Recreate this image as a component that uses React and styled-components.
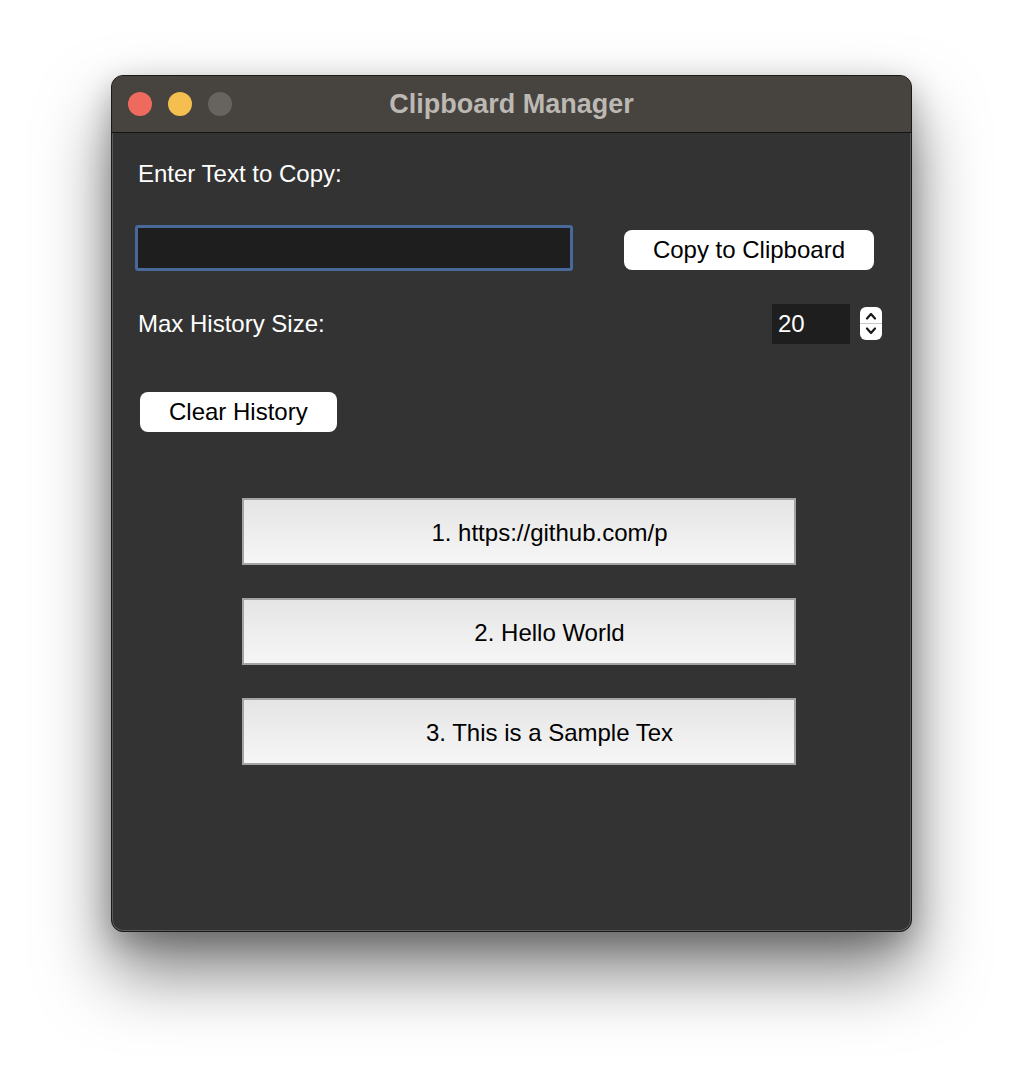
import styled, { createGlobalStyle } from "styled-components"

const Global = createGlobalStyle`
  html, body { margin: 0; padding: 0; background: #ffffff; }
  body { font-family: "Liberation Sans", Arial, sans-serif; }
`

const Page = styled.div`
  padding: 75px 0 0 111px;
  height: 1005px;
`

const Window = styled.div`
  width: 801px;
  height: 857px;
  box-sizing: border-box;
  border: 1px solid #1a1a1a;
  border-radius: 12px;
  overflow: hidden;
  background: #333333;
  box-shadow: 0 0 0 1px #5a5a5a inset, 0 40px 70px rgba(0,0,0,.5), 0 10px 30px rgba(0,0,0,.25);
  display: flex;
  flex-direction: column;
`

const TitleBar = styled.div`
  height: 56px;
  flex-shrink: 0;
  background: #47433f;
  border-bottom: 1px solid #141414;
  display: flex;
  align-items: center;
  position: relative;
  padding-left: 16px;
  gap: 16px;
`

const Light = styled.span`
  width: 24px;
  height: 24px;
  border-radius: 50%;
  background: ${p => p.$color};
`

const Title = styled.div`
  position: absolute;
  left: 0;
  right: 0;
  text-align: center;
  font-weight: bold;
  font-size: 27px;
  color: #bcb8b3;
  pointer-events: none;
`

const Body = styled.div`
  flex: 1;
  padding: 27px 29px 0 23px;
  display: flex;
  flex-direction: column;
`

const Label = styled.div`
  color: #ffffff;
  font-size: 24px;
  line-height: 28px;
  margin-left: 3px;
`

const Row = styled.div`
  display: flex;
  align-items: ${p => p.$align || "center"};
  justify-content: space-between;
  margin-top: ${p => p.$top || 0}px;
`

const TextInput = styled.div`
  width: 432px;
  height: 40px;
  border: 3px solid #49699a;
  border-radius: 3px;
  background: #1e1e1e;
`

const PillButton = styled.button`
  height: 40px;
  padding: 0 ${p => p.$pad || 29}px;
  border: none;
  border-radius: 8px;
  background: #ffffff;
  color: #000000;
  font-family: "Liberation Sans", Arial, sans-serif;
  font-size: 24px;
  margin: ${p => p.$margin || "0"};
`

const Spin = styled.div`
  display: flex;
  align-items: center;
  gap: 10px;
`

const SpinBox = styled.div`
  width: 78px;
  height: 40px;
  background: #1e1e1e;
  color: #ffffff;
  font-size: 24px;
  box-sizing: border-box;
  padding-left: 6px;
  display: flex;
  align-items: center;
`

const Stepper = styled.div`
  width: 22px;
  height: 33px;
  border-radius: 6px;
  background: #ffffff;
  display: flex;
  flex-direction: column;
  align-items: center;
  justify-content: center;
  margin-top: -2px;
`

const StepDivider = styled.div`
  width: 100%;
  height: 1px;
  background: #c8c8c8;
  margin: 3px 0;
`

const List = styled.div`
  display: flex;
  flex-direction: column;
  align-items: center;
  gap: 33px;
  margin-top: 66px;
  padding-left: 20px;
`

const Item = styled.div`
  width: 554px;
  height: 67px;
  box-sizing: border-box;
  border: 2px solid #a4a4a4;
  background: linear-gradient(#e5e5e5, #f6f6f6);
  display: flex;
  align-items: center;
  justify-content: center;
  padding: 3px 0 0 62px;
  font-size: 24px;
  color: #000000;
`

const Chevron = ({ up }) => (
  <svg width="12" height="8" viewBox="0 0 12 8" fill="none" stroke="#1a1a1a" strokeWidth="2.2" strokeLinecap="round" strokeLinejoin="round">
    <path d={up ? "M2 6.5 L6 2 L10 6.5" : "M2 1.5 L6 6 L10 1.5"} />
  </svg>
)

const history = ["1. https://github.com/p", "2. Hello World", "3. This is a Sample Tex"]

export default function App() {
  return (
    <>
      <Global />
      <Page>
        <Window>
          <TitleBar>
            <Light $color="#ee6a5e" />
            <Light $color="#f5bf4f" />
            <Light $color="#67645f" />
            <Title>Clipboard Manager</Title>
          </TitleBar>
          <Body>
            <Label>Enter Text to Copy:</Label>
            <Row $top={37} $align="flex-start">
              <TextInput />
              <PillButton $margin="5px 8px 0 0">Copy to Clipboard</PillButton>
            </Row>
            <Row $top={33}>
              <Label>Max History Size:</Label>
              <Spin>
                <SpinBox>20</SpinBox>
                <Stepper>
                  <Chevron up />
                  <StepDivider />
                  <Chevron />
                </Stepper>
              </Spin>
            </Row>
            <Row $top={48}>
              <PillButton $margin="0 0 0 5px">Clear History</PillButton>
            </Row>
            <List>
              {history.map(h => <Item key={h}>{h}</Item>)}
            </List>
          </Body>
        </Window>
      </Page>
    </>
  )
}
